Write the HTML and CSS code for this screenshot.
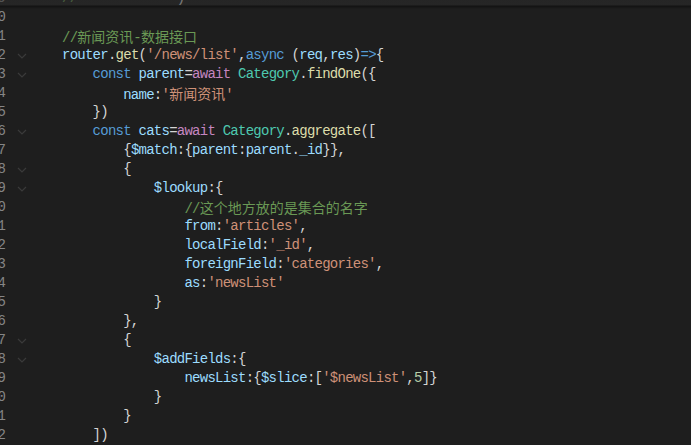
FILE: index.html
```html
<!DOCTYPE html>
<html lang="zh">
<head>
    <meta charset="UTF-8">
    <title>routes/web/index.js</title>
    <link rel="stylesheet" href="styles.css">
</head>
<body>
    <div class="editor">
        <div class="lines">
            <div class="row"><span class="ln">39</span><span class="fold"></span><span class="code"><span class="cm">//</span>             <span class="p">)</span></span></div>
            <div class="row"><span class="ln">40</span><span class="fold"></span><span class="code"></span></div>
            <div class="row"><span class="ln">41</span><span class="fold"></span><span class="code"><span class="cm">//<span class="cn">新闻资讯</span>-<span class="cn">数据接口</span></span></span></div>
            <div class="row"><span class="ln">42</span><span class="fold"><svg viewBox="0 0 10 6"><path d="M1 1l4 4 4-4"/></svg></span><span class="code"><span class="v">router</span><span class="p">.</span><span class="f">get</span><span class="p">(</span><span class="s">'/news/list'</span><span class="p">,</span><span class="k">async</span> <span class="p">(</span><span class="v">req</span><span class="p">,</span><span class="v">res</span><span class="p">)</span><span class="k">=&gt;</span><span class="p">{</span></span></div>
            <div class="row"><span class="ln">43</span><span class="fold"><svg viewBox="0 0 10 6"><path d="M1 1l4 4 4-4"/></svg></span><span class="code">    <span class="k">const</span> <span class="v">parent</span><span class="p">=</span><span class="a">await</span> <span class="t">Category</span><span class="p">.</span><span class="f">findOne</span><span class="p">({</span></span></div>
            <div class="row"><span class="ln">44</span><span class="fold"></span><span class="code">        <span class="v">name</span><span class="p">:</span><span class="s">'<span class="cn">新闻资讯</span>'</span></span></div>
            <div class="row"><span class="ln">45</span><span class="fold"></span><span class="code">    <span class="p">})</span></span></div>
            <div class="row"><span class="ln">46</span><span class="fold"><svg viewBox="0 0 10 6"><path d="M1 1l4 4 4-4"/></svg></span><span class="code">    <span class="k">const</span> <span class="v">cats</span><span class="p">=</span><span class="a">await</span> <span class="t">Category</span><span class="p">.</span><span class="f">aggregate</span><span class="p">([</span></span></div>
            <div class="row"><span class="ln">47</span><span class="fold"></span><span class="code">        <span class="p">{</span><span class="v">$match</span><span class="p">:{</span><span class="v">parent</span><span class="p">:</span><span class="v">parent</span><span class="p">.</span><span class="v">_id</span><span class="p">}},</span></span></div>
            <div class="row"><span class="ln">48</span><span class="fold"><svg viewBox="0 0 10 6"><path d="M1 1l4 4 4-4"/></svg></span><span class="code">        <span class="p">{</span></span></div>
            <div class="row"><span class="ln">49</span><span class="fold"><svg viewBox="0 0 10 6"><path d="M1 1l4 4 4-4"/></svg></span><span class="code">            <span class="v">$lookup</span><span class="p">:{</span></span></div>
            <div class="row"><span class="ln">50</span><span class="fold"></span><span class="code">                <span class="cm">//<span class="cn">这个地方放的是集合的名字</span></span></span></div>
            <div class="row"><span class="ln">51</span><span class="fold"></span><span class="code">                <span class="v">from</span><span class="p">:</span><span class="s">'articles'</span><span class="p">,</span></span></div>
            <div class="row"><span class="ln">52</span><span class="fold"></span><span class="code">                <span class="v">localField</span><span class="p">:</span><span class="s">'_id'</span><span class="p">,</span></span></div>
            <div class="row"><span class="ln">53</span><span class="fold"></span><span class="code">                <span class="v">foreignField</span><span class="p">:</span><span class="s">'categories'</span><span class="p">,</span></span></div>
            <div class="row"><span class="ln">54</span><span class="fold"></span><span class="code">                <span class="v">as</span><span class="p">:</span><span class="s">'newsList'</span></span></div>
            <div class="row"><span class="ln">55</span><span class="fold"></span><span class="code">            <span class="p">}</span></span></div>
            <div class="row"><span class="ln">56</span><span class="fold"></span><span class="code">        <span class="p">},</span></span></div>
            <div class="row"><span class="ln">57</span><span class="fold"><svg viewBox="0 0 10 6"><path d="M1 1l4 4 4-4"/></svg></span><span class="code">        <span class="p">{</span></span></div>
            <div class="row"><span class="ln">58</span><span class="fold"><svg viewBox="0 0 10 6"><path d="M1 1l4 4 4-4"/></svg></span><span class="code">            <span class="v">$addFields</span><span class="p">:{</span></span></div>
            <div class="row"><span class="ln">59</span><span class="fold"></span><span class="code">                <span class="v">newsList</span><span class="p">:{</span><span class="v">$slice</span><span class="p">:[</span><span class="s">'$newsList'</span><span class="p">,</span><span class="n">5</span><span class="p">]}</span></span></div>
            <div class="row"><span class="ln">60</span><span class="fold"></span><span class="code">            <span class="p">}</span></span></div>
            <div class="row"><span class="ln">61</span><span class="fold"></span><span class="code">        <span class="p">}</span></span></div>
            <div class="row"><span class="ln">62</span><span class="fold"></span><span class="code">    <span class="p">])</span></span></div>
            <div class="row"><span class="ln">63</span><span class="fold"></span><span class="code"></span></div>
        </div>
        <div class="scroll-shadow"></div>
    </div>
</body>
</html>
```

FILE: styles.css
```css
html, body {
    margin: 0;
    padding: 0;
    height: 100%;
    overflow: hidden;
    background: #1e1e1e;
}

.editor {
    position: relative;
    height: 100%;
    overflow: hidden;
    font-family: "Liberation Mono", "Noto Sans CJK SC", monospace;
    font-size: 14px;
    color: #d4d4d4;
}

.lines {
    margin-top: -11px;
}

.row {
    display: flex;
    height: 19px;
    line-height: 18px;
    white-space: pre;
}

.ln {
    width: 30px;
    margin-left: -24px;
    text-align: right;
    color: #858585;
    flex-shrink: 0;
}

.fold {
    width: 56px;
    flex-shrink: 0;
    display: flex;
    align-items: center;
}

.fold svg {
    width: 10px;
    height: 6px;
    margin-left: 11px;
    fill: none;
    stroke: #3a3a3a;
    stroke-width: 1.2;
}

.code {
    letter-spacing: -0.75px;
}

.cn {
    font-family: "Noto Sans CJK SC", sans-serif;
    letter-spacing: 0;
}

/* token colours */
.cm { color: #6a9955; }
.k  { color: #569cd6; }
.a  { color: #c586c0; }
.v  { color: #9cdcfe; }
.f  { color: #dcdcaa; }
.t  { color: #4ec9b0; }
.s  { color: #ce9178; }
.n  { color: #b5cea8; }
.p  { color: #d4d4d4; }

/* shadow under the top edge when scrolled */
.scroll-shadow {
    position: absolute;
    top: 0;
    left: 0;
    right: 0;
    height: 9px;
    background: linear-gradient(to bottom,
        rgba(44, 44, 44, 0.55) 0,
        rgba(44, 44, 44, 0.55) 5px,
        rgba(10, 10, 10, 0.6) 6px,
        rgba(30, 30, 30, 0) 9px);
    pointer-events: none;
}
```
